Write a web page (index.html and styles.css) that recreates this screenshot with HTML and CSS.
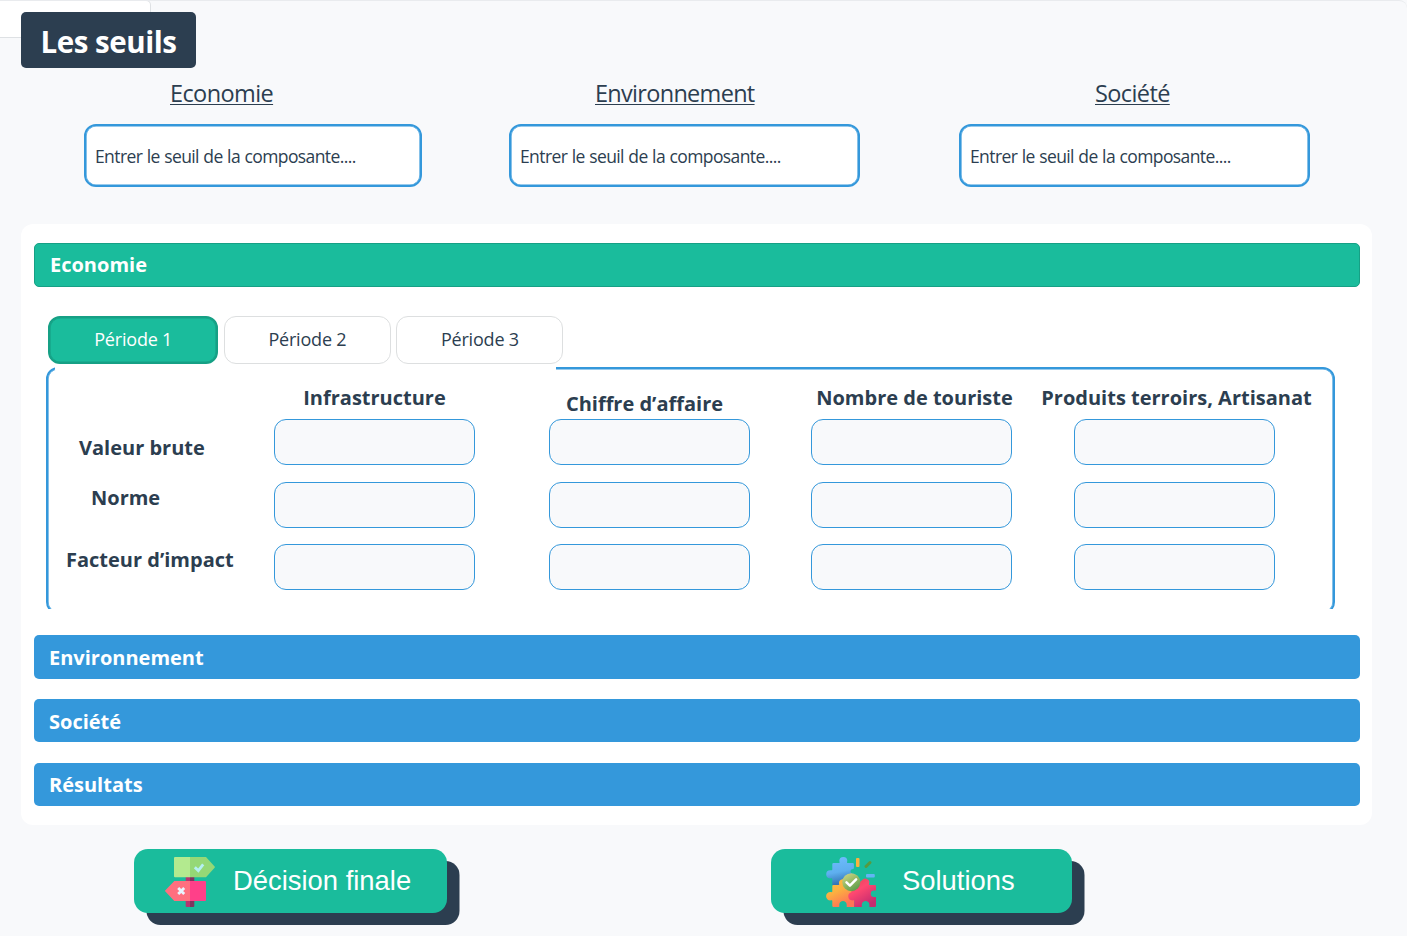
FILE: index.html
```html
<!DOCTYPE html>
<html lang="fr">
<head>
<meta charset="utf-8">
<title>Les seuils</title>
<link rel="stylesheet" href="styles.css">
</head>
<body>
<div class="page">
  <div class="back-tab"></div>
  <h1 class="title">Les seuils</h1>

  <section class="thresholds">
    <div class="threshold">
      <h2 class="threshold-name">Economie</h2>
      <div class="threshold-input narrow">Entrer le seuil de la composante....</div>
    </div>
    <div class="threshold">
      <h2 class="threshold-name long">Environnement</h2>
      <div class="threshold-input">Entrer le seuil de la composante....</div>
    </div>
    <div class="threshold">
      <h2 class="threshold-name shifted">Société</h2>
      <div class="threshold-input">Entrer le seuil de la composante....</div>
    </div>
  </section>

  <main class="panel">
    <div class="bar open">Economie</div>
    <div class="tabs">
      <div class="tab active">Période 1</div>
      <div class="tab">Période 2</div>
      <div class="tab">Période 3</div>
    </div>
    <div class="sheet-clip">
      <div class="sheet">
        <div class="row-labels">
          <div class="label valeur">Valeur brute</div>
          <div class="label norme">Norme</div>
          <div class="label facteur">Facteur d’impact</div>
        </div>
        <div class="column infra">
          <div class="label head">Infrastructure</div>
          <div class="field"></div><div class="field"></div><div class="field"></div>
        </div>
        <div class="column chiffre">
          <div class="label head">Chiffre d’affaire</div>
          <div class="field"></div><div class="field"></div><div class="field"></div>
        </div>
        <div class="column nombre">
          <div class="label head">Nombre de touriste</div>
          <div class="field"></div><div class="field"></div><div class="field"></div>
        </div>
        <div class="column produits">
          <div class="label head">Produits terroirs, Artisanat</div>
          <div class="field"></div><div class="field"></div><div class="field"></div>
        </div>
      </div>
      <div class="tab-gap"></div>
    </div>
    <div class="closed-bars">
      <div class="bar">Environnement</div>
      <div class="bar">Société</div>
      <div class="bar last">Résultats</div>
    </div>
  </main>

  <footer class="actions">
    <button class="action decision">
      <svg class="icon" viewBox="0 0 50 50">
        <path fill="#b43670" d="M20.7 19H25v31h-3.3a1 1 0 0 1-1-1z"/>
        <path fill="#80345f" d="M25 19h4.3v30a1 1 0 0 1-1 1H25z"/>
        <path fill="#b3ea8f" d="M10 0h15v20.3H10a1 1 0 0 1-1-1V1a1 1 0 0 1 1-1z"/>
        <path fill="#95d876" d="M25 0h16l8.6 9.4a1 1 0 0 1 0 1.4L41 20.3H25z"/>
        <path fill="#ff6f7f" d="M25 24H9.3L.4 33.2a1 1 0 0 0 0 1.4l8.9 9.3H25z"/>
        <path fill="#ff4089" d="M25 24h15a1 1 0 0 1 1 1v18a1 1 0 0 1-1 .9H25z"/>
        <path fill="none" stroke="#b5f0f2" stroke-width="2.8" d="m29.8 10.2 3.5 3.4 4.9-6.3"/>
        <path fill="none" stroke="#e9f5ff" stroke-width="2.8" d="m13.2 31 6 6m0-6-6 6"/>
      </svg>
      <span>Décision finale</span>
    </button>
    <button class="action solutions">
      <svg class="icon" viewBox="0 0 50 50">
        <defs>
          <linearGradient id="blue" x1="0" y1="0" x2=".2" y2="1"><stop offset="0" stop-color="#70bdff"/><stop offset=".6" stop-color="#5eafef"/><stop offset="1" stop-color="#3475b5"/></linearGradient>
          <linearGradient id="gold" x1="0" y1="0" x2=".5" y2="1"><stop offset="0" stop-color="#fcc145"/><stop offset=".5" stop-color="#fbb040"/><stop offset="1" stop-color="#ff7456"/></linearGradient>
          <linearGradient id="pink" x1="0" y1="0" x2=".6" y2="1"><stop offset="0" stop-color="#d94a52"/><stop offset=".45" stop-color="#ff4870"/><stop offset="1" stop-color="#c62c70"/></linearGradient>
          <linearGradient id="check" x1="0" y1="0" x2=".6" y2="1"><stop offset="0" stop-color="#d8da88"/><stop offset="1" stop-color="#5f9e4b"/></linearGradient>
        </defs>
        <path fill="url(#blue)" d="M6.3 7.2q0-1.2 1.2-1.2H13c1 0 .6-1 .3-2a4 4 0 0 1 8 0c-.3 1-.7 2 .3 2h5q1.3 0 1.3 1.2v4c0 1.2-2.5.4-3.3 2.3-.8 2.4 1.5 3.6 3.3 3V28H6.3v-6c0-1-1-.7-2-.6a4.1 4.1 0 0 1 0-8.2c1 .1 2 .4 2-.6z"/>
        <path fill="url(#gold)" d="M6.3 29q0-1.1 1.2-1.1h5c1.2 0 .7-.8.4-2a4 4 0 0 1 7.8-1L28.2 30v20h-7.5v-2.5c0-4.7-7.4-4.7-7.4 0V50H7.5q-1.2 0-1.2-1.2v-4.6c0-1.3-1-.9-2-.8a4.2 4.2 0 0 1 0-8.4c1 .1 2 .5 2-.7z"/>
        <path fill="url(#pink)" d="M28.2 29.4 36 23.3a4 4 0 0 1 7.2 3.2c-.3.8-.4 1.4.6 1.4h5q1.2 0 1.2 1.1v4c0 1-.8.4-2 .5a3.2 3.2 0 0 0 0 6.4c1.2.2 2-.4 2 .6v8.3q0 1.2-1.2 1.2h-5.4v-2.6c0-4.7-7.6-4.7-7.6 0V50h-7.6v-5.8c0-1.4-1-.8-2-.8a4.2 4.2 0 0 1-1-8.2z"/>
        <rect x="30" y="1" width="3.5" height="9" rx="1" fill="#fbb23f"/>
        <path stroke="#579a3f" stroke-width="3" stroke-linecap="round" d="m40 9.5 4-4"/>
        <rect x="40" y="17" width="8.8" height="3.4" rx="1" fill="#62b5f4"/>
        <circle cx="25.3" cy="25.2" r="9" fill="url(#check)"/>
        <path fill="none" stroke="#fff" stroke-width="2.5" stroke-linecap="round" stroke-linejoin="round" d="m20.5 25.4 3.4 3.3 6.2-6.4"/>
      </svg>
      <span>Solutions</span>
    </button>
  </footer>
</div>
</body>
</html>
```
FILE: styles.css
```css
* { box-sizing: border-box; }

body {
  margin: 0;
  background: #f8f9fb;
  color: #2c3e50;
  font-family: "Open Sans", "Noto Sans", sans-serif;
}

.page {
  position: relative;
  width: 1407px;
  height: 936px;
  overflow: hidden;
  padding: 12px 21px 0;
  border-top: 1px solid #e9ebee;
  border-top-right-radius: 8px;
}

.back-tab {
  position: absolute;
  left: 0;
  top: -1px;
  width: 151px;
  height: 38px;
  background: #fff;
  border: 1px solid #dee1e4;
  border-left: 0;
  border-top-right-radius: 5px;
}

.title {
  position: relative;
  width: 175px;
  height: 56px;
  margin: -1px 0 0;
  padding-left: 19.5px;
  border-radius: 5px;
  background: #2c3e50;
  color: #fff;
  font-size: 29.5px;
  font-weight: 700;
  line-height: 60px;
  letter-spacing: -0.45px;
  white-space: nowrap;
}

.thresholds {
  display: grid;
  grid-template-columns: 425px 450px 351px;
  height: 156px;
  padding: 6px 0 0 63px;
}

.threshold-name {
  width: max-content;
  margin: 0 0 11.5px 86px;
  font-size: 23.5px;
  font-weight: 400;
  line-height: 38px;
  letter-spacing: -0.6px;
  text-decoration: underline;
  text-decoration-thickness: 1px;
  text-underline-offset: 2px;
}

.threshold-name.long { letter-spacing: -0.7px; }
.threshold-name.shifted { margin-left: 136px; }

.threshold-input {
  width: 350.5px;
  height: 63.5px;
  padding-left: 9px;
  border: 2px solid #3498db;
  border-radius: 12px;
  background: #fff;
  box-shadow: inset 0 0 0 0.6px #3498db;
  font-size: 17.5px;
  line-height: 60px;
  letter-spacing: -0.6px;
  word-spacing: 0.5px;
  white-space: nowrap;
}

.threshold-input.narrow { width: 338px; }

.panel {
  width: 1351px;
  height: 601px;
  padding: 19px 12px 0 13px;
  border-radius: 12px;
  background: #fff;
}

.bar {
  height: 43.5px;
  padding-left: 15px;
  border-radius: 5px;
  background: #3498db;
  color: #fff;
  font-size: 20px;
  font-weight: 700;
  line-height: 45px;
}

.bar.last { line-height: 43px; }

.bar.open {
  border: 1px solid #16a085;
  background: #1abc9c;
  line-height: 42px;
}

.tabs {
  display: flex;
  gap: 5.5px;
  height: 48px;
  margin: 29px 0 0 14px;
}

.tab {
  width: 167px;
  border: 1px solid #dddfe0;
  border-radius: 12px;
  font-size: 18px;
  line-height: 44px;
  letter-spacing: -0.2px;
  text-align: center;
}

.tab.active {
  width: 170.4px;
  border: 2px solid #16a085;
  background: #1abc9c;
  box-shadow: inset 0 0 0 0.6px #16a085;
  color: #fff;
  line-height: 42px;
}

.sheet-clip {
  position: relative;
  width: 1289px;
  height: 242px;
  margin: 3px 0 0 12px;
  overflow: hidden;
}

.sheet {
  display: grid;
  grid-template-columns: 226px 275px 262px 263px 201px;
  height: 247px;
  border: 2px solid #3498db;
  border-radius: 12px;
  box-shadow: inset 0 0 0 0.6px #3498db;
}

.tab-gap {
  position: absolute;
  left: 9px;
  top: 0;
  width: 501px;
  height: 3px;
  background: #fff;
}

.label {
  font-size: 20px;
  font-weight: 700;
  line-height: 26px;
  white-space: nowrap;
}

.row-labels { padding-top: 66px; }
.valeur { margin-left: 31px; }
.norme { margin: 24px 0 0 43px; }
.facteur { margin: 36px 0 0 18px; }

.column {
  display: flex;
  flex-direction: column;
  align-items: center;
  gap: 16.5px;
  width: 201px;
  padding-top: 16px;
}

.head { margin-bottom: -8px; }
.chiffre .head { position: relative; left: -5px; top: 6px; }
.nombre .head { position: relative; left: 3px; }
.produits .head { position: relative; left: 2px; }

.field {
  width: 201px;
  height: 46px;
  flex: none;
  border: 1px solid #3498db;
  border-radius: 12px;
  background: #f8f9fb;
}

.closed-bars {
  display: grid;
  gap: 20.3px;
  margin-top: 26.6px;
}

.actions {
  display: flex;
  gap: 324px;
  padding: 24px 0 0 113px;
}

.action {
  display: flex;
  align-items: center;
  height: 64px;
  padding: 0;
  border: 0;
  border-radius: 14px;
  background: #1abc9c;
  box-shadow: 12.5px 12px 0 #2c3e50;
  color: #fff;
  font: 27.4px/62px "Liberation Sans", Arial, sans-serif;
}

.icon { width: 50px; height: 50px; margin-top: 2px; }
.decision { width: 313px; padding-left: 31px; gap: 18px; }
.solutions { width: 301px; padding-left: 55px; gap: 26px; }
```
